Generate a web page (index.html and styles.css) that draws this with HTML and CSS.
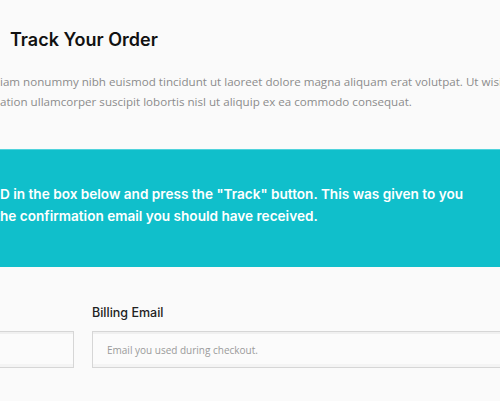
FILE: index.html
```html
<!DOCTYPE html>
<html lang="en">
<head>
<meta charset="utf-8">
<title>Track Your Order</title>
<link rel="stylesheet" href="styles.css">
</head>
<body>
<main class="page">
  <h1 class="title">Track Your Order</h1>
  <p class="intro">
    <span class="line"><span class="cut">Lorem ipsum dolor sit amet, consectetuer adipiscing elit, sed d</span>iam nonummy nibh euismod tincidunt ut laoreet dolore magna aliquam erat volutpat. Ut wisi enim ad minim veniam,</span>
    <span class="line"><span class="cut">quis nostrud exerci t</span>ation ullamcorper suscipit lobortis nisl ut aliquip ex ea commodo consequat.</span>
  </p>
  <section class="notice">
    <p class="notice-text">
      <span class="line"><span class="cut">To track your order please enter your Order I</span>D in the box below and press the "Track" button. This was given to you</span>
      <span class="line"><span class="cut">on your receipt and in t</span>he confirmation email you should have received.</span>
    </p>
  </section>
  <form class="track">
    <div class="field field-id">
      <label class="label">Order ID</label>
      <input class="input" type="text" placeholder="Found in your order confirmation email.">
    </div>
    <div class="field field-email">
      <label class="label">Billing Email</label>
      <input class="input" type="text" placeholder="Email you used during checkout.">
    </div>
  </form>
</main>
</body>
</html>
```
FILE: styles.css
```css
html, body {
  margin: 0;
  padding: 0;
  background: #fafafa;
  overflow: hidden;
}
.page {
  width: 500px;
}
.line {
  display: block;
  white-space: nowrap;
}
.cut {
  display: inline-flex;
  width: 0;
  justify-content: flex-end;
}
.title {
  font-family: "Inter", "Noto Sans", sans-serif;
  font-weight: 600;
  font-size: 18px;
  color: #111;
  margin: 30px 0 0 10px;
  line-height: 20px;
}
.intro {
  font-family: "Open Sans", sans-serif;
  font-size: 11.6px;
  line-height: 20px;
  color: #8c8c8c;
  margin: 22px 0 0 0;
}
.notice {
  background: #10bfcb;
  margin-top: 37px;
  height: 118px;
  padding-top: 33px;
  box-sizing: border-box;
  border-top: 1px solid #4fd3dc;
}
.notice-text {
  margin: 0;
  font-family: "Inter", "Noto Sans", sans-serif;
  font-weight: 600;
  font-size: 13.6px;
  line-height: 22px;
  color: #fff;
}
.track {
  display: flex;
  gap: 18px;
  margin: 38px 0 0 -326px;
}
.field {
  display: flex;
  flex-direction: column;
  gap: 10px;
}
.field-id { width: 400px; flex: none; }
.field-email { width: 460px; flex: none; }
.label {
  font-family: "Inter", "Noto Sans", sans-serif;
  font-weight: 500;
  font-size: 12.5px;
  line-height: 16px;
  color: #222;
}
.input {
  box-sizing: border-box;
  height: 37px;
  border: 1px solid #d6d6d6;
  background: #fbfbfb;
  padding: 0 14px;
  font-family: "Open Sans", sans-serif;
  font-size: 10px;
  color: #555;
  outline: none;
  box-shadow: inset 0 2px 0 #f0f0f0, inset 0 -3px 0 #f4f4f4;
}
.input::placeholder {
  color: #9a9a9a;
}
```
